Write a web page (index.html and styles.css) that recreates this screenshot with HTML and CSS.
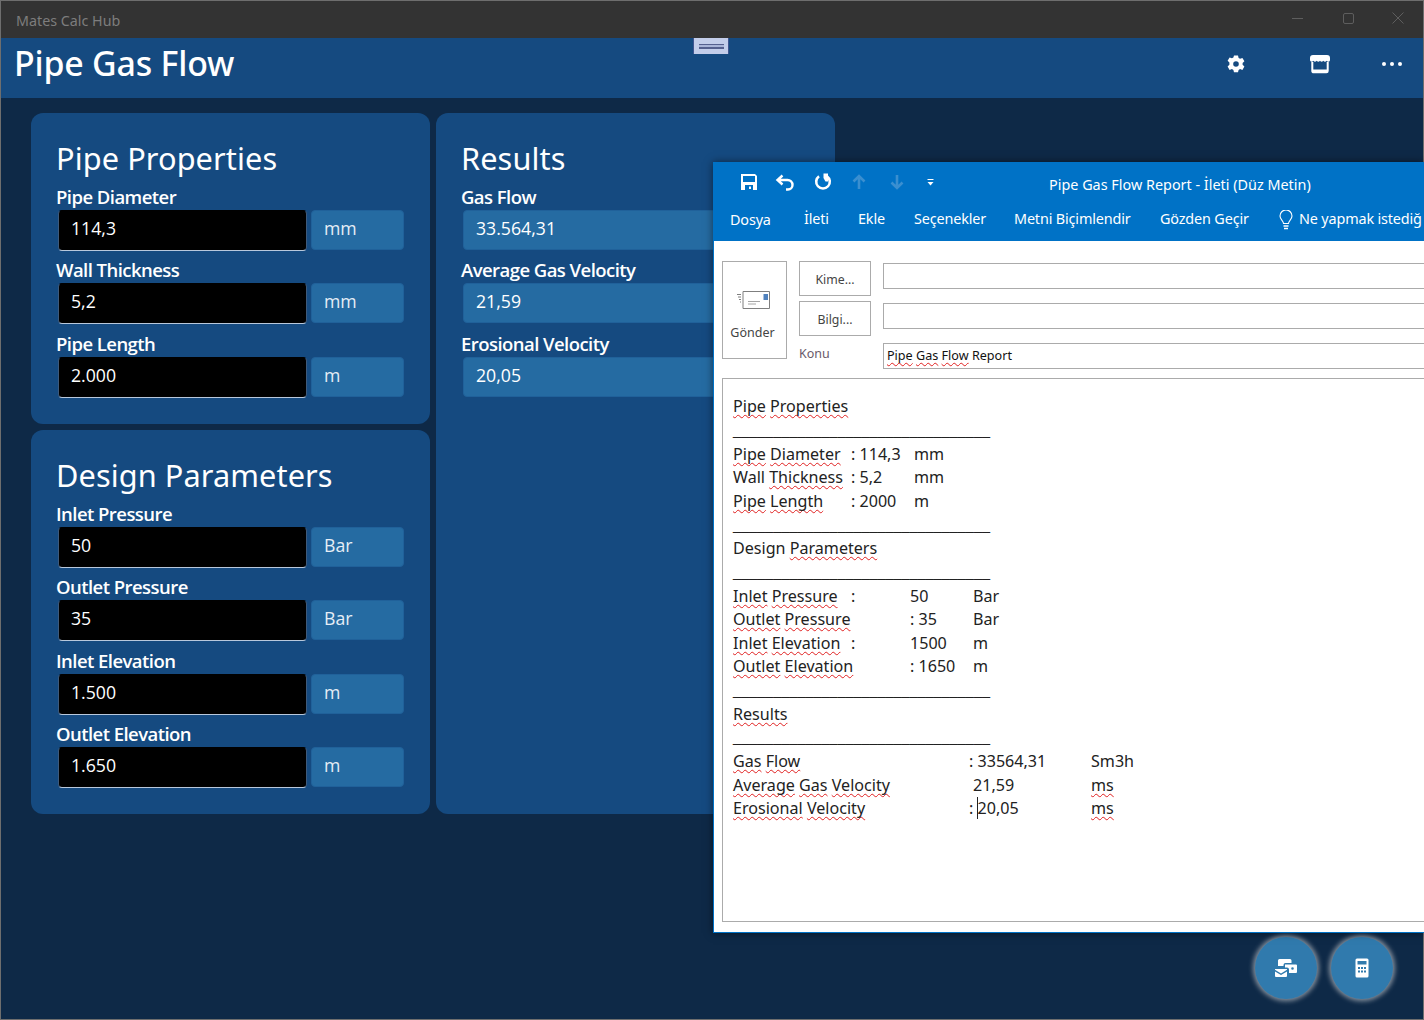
FILE: index.html
```html
<!DOCTYPE html>
<html lang="en">
<head>
<meta charset="utf-8">
<title>Mates Calc Hub</title>
<link rel="stylesheet" href="styles.css">
</head>
<body>
<div class="app">
  <div class="titlebar">
    <span class="app-name">Mates Calc Hub</span>
    <div class="win-controls">
      <svg width="14" height="14" viewBox="0 0 14 14"><path d="M1 7.5h11" stroke="#5e5e5e" fill="none"/></svg>
      <svg width="14" height="14" viewBox="0 0 14 14"><rect x="2.5" y="2.5" width="10" height="10" rx="1.5" stroke="#5e5e5e" fill="none"/></svg>
      <svg width="14" height="14" viewBox="0 0 14 14"><path d="M1.5 1.5l11 11M12.5 1.5l-11 11" stroke="#5e5e5e" fill="none"/></svg>
    </div>
  </div>
  <header class="appbar">
    <h1 class="page-title">Pipe Gas Flow</h1>
    <div class="handle"><span class="handle-line"></span></div>
    <div class="app-actions">
      <svg class="act-gear" width="20" height="20" viewBox="0 0 20 20"><path fill="#fff" fill-rule="evenodd" d="M8 1.5h4l.6 2.4 1.5.8 2.3-.8 2 3.4-1.8 1.7v1.8l1.8 1.7-2 3.4-2.3-.8-1.500.8-.6 2.400H8l-.6-2.400-1.500-.8-2.300.8-2-3.400 1.800-1.700V8.500L1.600 6.800l2-3.400 2.300.8 1.500-.8zM10 7.200a2.800 2.800 0 1 0 0 5.600 2.800 2.800 0 0 0 0-5.600z"/></svg>
      <svg class="act-store" width="22" height="20" viewBox="0 0 22 20"><path fill="#fff" d="M4 1h14a3 3 0 0 1 3 3v2.200a1.800 1.800 0 0 1-3.300.6 2.300 2.300 0 0 1-3.400 0 2.300 2.300 0 0 1-3.300 0 2.300 2.300 0 0 1-3.300 0 2.300 2.300 0 0 1-3.400 0A1.800 1.800 0 0 1 1 6.200V4a3 3 0 0 1 3-3z"/><path d="M3.300 8v9a1.300 1.300 0 0 0 1.300 1.300h12.800a1.300 1.300 0 0 0 1.300-1.300V8" fill="none" stroke="#fff" stroke-width="2"/><path fill="#fff" d="M4 15.500h14V18H4z"/></svg>
      <svg class="act-more" width="22" height="6" viewBox="0 0 22 6"><circle cx="3" cy="3" r="2" fill="#fff"/><circle cx="11" cy="3" r="2" fill="#fff"/><circle cx="19" cy="3" r="2" fill="#fff"/></svg>
    </div>
  </header>
  <main class="content">
    <div class="col">
      <section class="card card-pipe">
        <h2 class="card-title">Pipe Properties</h2>
        <div class="field"><label class="field-label">Pipe Diameter</label><div class="field-row"><div class="input">114,3</div><div class="unit">mm</div></div></div>
        <div class="field"><label class="field-label">Wall Thickness</label><div class="field-row"><div class="input">5,2</div><div class="unit">mm</div></div></div>
        <div class="field"><label class="field-label">Pipe Length</label><div class="field-row"><div class="input">2.000</div><div class="unit">m</div></div></div>
      </section>
      <section class="card card-design">
        <h2 class="card-title">Design Parameters</h2>
        <div class="field"><label class="field-label">Inlet Pressure</label><div class="field-row"><div class="input">50</div><div class="unit">Bar</div></div></div>
        <div class="field"><label class="field-label">Outlet Pressure</label><div class="field-row"><div class="input">35</div><div class="unit">Bar</div></div></div>
        <div class="field"><label class="field-label">Inlet Elevation</label><div class="field-row"><div class="input">1.500</div><div class="unit">m</div></div></div>
        <div class="field"><label class="field-label">Outlet Elevation</label><div class="field-row"><div class="input">1.650</div><div class="unit">m</div></div></div>
      </section>
    </div>
    <div class="col">
      <section class="card card-results">
        <h2 class="card-title">Results</h2>
        <div class="field"><label class="field-label">Gas Flow</label><div class="field-row"><div class="output">33.564,31</div></div></div>
        <div class="field"><label class="field-label">Average Gas Velocity</label><div class="field-row"><div class="output">21,59</div></div></div>
        <div class="field"><label class="field-label">Erosional Velocity</label><div class="field-row"><div class="output">20,05</div></div></div>
      </section>
    </div>
  </main>
  <div class="fabs">
    <button class="fab">
      <svg width="24" height="20" viewBox="0 0 24 20"><path fill="#fff" d="M4 2.500A1.500 1.500 0 0 1 5.500 1H16a1.500 1.500 0 0 1 1.500 1.500V5h-6a2 2 0 0 0-2 2v1H4z"/><path fill="#fff" d="M11 6.500h11a1 1 0 0 1 1 1V14a1 1 0 0 1-1 1h-7v-3.500a2 2 0 0 0-2-2h-2zM18.500 9.200a1.300 1.300 0 1 0 0 2.600 1.300 1.300 0 0 0 0-2.600z" fill-rule="evenodd"/><path fill="#fff" d="M1 11h12v.8L7 15.400 1 11.800zM1 13.400l6 3.500 6-3.500V18a1 1 0 0 1-1 1H2a1 1 0 0 1-1-1z"/></svg>
    </button>
    <button class="fab">
      <svg width="14" height="20" viewBox="0 0 14 20"><path fill="#fff" fill-rule="evenodd" d="M2 .500h10A1.500 1.500 0 0 1 13.500 2v16a1.500 1.500 0 0 1-1.500 1.500H2A1.500 1.500 0 0 1 .5 18V2A1.500 1.500 0 0 1 2 .500zM2.500 3v3.500h9V3zM3 9v2h2V9zm3 0v2h2V9zm3 0v2h2V9zM3 12.500v2h2v-2zm3 0v2h2v-2zm3 0v2h2v-2z"/></svg>
    </button>
  </div>
</div>

<div class="mail">
  <div class="mail-top">
    <div class="qat">
      <svg class="qat-save" width="16" height="16" viewBox="0 0 16 16"><path fill="#fff" fill-rule="evenodd" d="M0 0h14l2 2v14H0zM2 2v6h12V2zM4 11v5h8v-5zm4 1.500h2V15H8z"/></svg>
      <svg class="qat-undo" width="20" height="17" viewBox="0 0 20 17"><path d="M7.500 1.500L2.500 6l5 4.500M3 6h9.500a5 5 0 0 1 5 5 4.500 4.500 0 0 1-4.500 4.500h-2" fill="none" stroke="#fff" stroke-width="2.400"/></svg>
      <svg class="qat-redo" width="18" height="18" viewBox="0 0 18 18"><path d="M5 3.200A6.800 6.800 0 1 0 13 3.200" fill="none" stroke="#fff" stroke-width="2.600"/><path d="M9.500.5h4.500v8h-2.500l-2-3.500z" fill="#fff"/></svg>
      <svg class="qat-arrow" width="14" height="16" viewBox="0 0 14 16"><path d="M7 15V2.500M1.500 7.500L7 2l5.500 5.500" fill="none" stroke="#3a8fd0" stroke-width="2.600"/></svg>
      <svg class="qat-arrow" width="14" height="16" viewBox="0 0 14 16"><path d="M7 1v12.500M1.500 8.500L7 14l5.500-5.500" fill="none" stroke="#3a8fd0" stroke-width="2.600"/></svg>
      <svg class="qat-more" width="7" height="8" viewBox="0 0 7 8"><path d="M.5 1.500h6" stroke="#fff"/><path d="M.5 4h6L3.500 7.500z" fill="#fff"/></svg>
    </div>
    <div class="mail-title">Pipe Gas Flow Report - İleti (Düz Metin)</div>
  </div>
  <nav class="ribbon">
    <span class="tab tab-file">Dosya</span>
    <span class="tab tab-ileti">İleti</span>
    <span class="tab tab-ekle">Ekle</span>
    <span class="tab tab-sec">Seçenekler</span>
    <span class="tab tab-metni">Metni Biçimlendir</span>
    <span class="tab tab-gozden">Gözden Geçir</span>
    <svg class="bulb" width="14" height="20" viewBox="0 0 14 20"><path d="M4.500 13.500C4.500 11 1 9.500 1 6a6 6 0 0 1 12 0c0 3.500-3.500 5-3.500 7.500z" fill="none" stroke="#fff" stroke-width="1.100"/><path d="M4.500 16h5M5 18.500h4" stroke="#fff" stroke-width="1.300"/></svg>
    <span class="tab tab-tell">Ne yapmak istediğ</span>
  </nav>
  <div class="compose">
    <div class="send">
      <svg width="34" height="20" viewBox="0 0 34 20"><path d="M7 .500h26.500V17.500H7z" fill="#fff" stroke="#7f7f7f"/><path d="M27.500 3h4.500v6h-4.500z" fill="#4f81bd"/><path d="M12 10.500h12M12 13h8" stroke="#a6a6a6"/><path d="M1 3.500h4M2 6h3M3 8.500h2M4 11h1" stroke="#7f7f7f"/></svg>
      <span class="send-text">Gönder</span>
    </div>
    <div class="addr">
      <div class="addr-row"><div class="addr-btn">Kime...</div><div class="addr-input"></div></div>
      <div class="addr-row"><div class="addr-btn">Bilgi...</div><div class="addr-input"></div></div>
      <div class="addr-row addr-subject"><div class="addr-label">Konu</div><div class="addr-input subject-input"><span class="sp">Pipe</span> <span class="sp">Gas</span> <span class="sp">Flow</span> Report</div></div>
    </div>
  </div>
  <div class="body-box">
    <div class="ln"><span><span class="sp">Pipe</span> <span class="sp">Properties</span></span></div>
    <div class="ln rule">________________________________</div>
    <div class="ln"><span class="c1"><span class="sp">Pipe</span> <span class="sp">Diameter</span></span><span class="c2">: 114,3</span><span>mm</span></div>
    <div class="ln"><span class="c1">Wall <span class="sp">Thickness</span></span><span class="c2">: 5,2</span><span>mm</span></div>
    <div class="ln"><span class="c1"><span class="sp">Pipe</span> <span class="sp">Length</span></span><span class="c2">: 2000</span><span>m</span></div>
    <div class="ln rule">________________________________</div>
    <div class="ln"><span>Design <span class="sp">Parameters</span></span></div>
    <div class="ln rule">________________________________</div>
    <div class="ln"><span class="c3"><span class="sp">Inlet</span> <span class="sp">Pressure</span></span><span class="c3b">:</span><span class="c4">50</span><span>Bar</span></div>
    <div class="ln"><span class="c3w"><span class="sp">Outlet</span> <span class="sp">Pressure</span></span><span class="c4">: 35</span><span>Bar</span></div>
    <div class="ln"><span class="c3"><span class="sp">Inlet</span> <span class="sp">Elevation</span></span><span class="c3b">:</span><span class="c4">1500</span><span>m</span></div>
    <div class="ln"><span class="c3w"><span class="sp">Outlet</span> <span class="sp">Elevation</span></span><span class="c4">: 1650</span><span>m</span></div>
    <div class="ln rule">________________________________</div>
    <div class="ln"><span class="sp">Results</span></div>
    <div class="ln rule">________________________________</div>
    <div class="ln"><span class="c5"><span class="sp">Gas</span> <span class="sp">Flow</span></span><span class="c6">: 33564,31</span><span>Sm3h</span></div>
    <div class="ln"><span class="c5"><span class="sp">Average</span> <span class="sp">Gas</span> <span class="sp">Velocity</span></span><span class="c6 c6-in">21,59</span><span class="sp">ms</span></div>
    <div class="ln"><span class="c5"><span class="sp">Erosional</span> <span class="sp">Velocity</span></span><span class="c6">: <span class="caret">20,05</span></span><span class="sp">ms</span></div>
  </div>
</div>
</body>
</html>
```
FILE: styles.css
```css
* { box-sizing: border-box; }
html, body { margin: 0; height: 100%; }
body { width: 1424px; height: 1020px; overflow: hidden; font-family: "Open Sans", "Noto Sans", sans-serif; position: relative; }
.app { width: 1424px; height: 1020px; background: #0e2947; border: 1px solid #6e6e6e; display: flex; flex-direction: column; position: relative; }
.titlebar { height: 37px; flex: none; background: #333; display: flex; align-items: center; justify-content: space-between; }
.app-name { margin-left: 15px; margin-top: 1px; font-size: 14.300px; color: #7d7d7d; font-family: "Noto Sans", sans-serif; }
.win-controls { display: flex; gap: 36px; margin-right: 18px; margin-top: -4px; }
.appbar { height: 60px; flex: none; background: #154a80; display: flex; align-items: center; position: relative; }
.page-title { margin: 0 0 10px 13px; font-size: 33.900px; font-weight: 500; color: #fff; line-height: 50px; font-family: "Noto Sans", sans-serif; letter-spacing: -.2px; }
.handle { position: absolute; left: 692px; top: 0; width: 36px; height: 16px; background: #c3cdea; border-left: 1px solid #3f5590; border-right: 1px solid #3f5590; display: flex; align-items: center; justify-content: center; }
.handle-line { width: 25px; height: 5px; background: #a9b4d8; border-top: 1px solid #55608f; border-bottom: 2px solid #55608f; }
.app-actions { margin-left: auto; display: flex; align-items: center; margin-right: 20px; margin-bottom: 8px; }
.act-gear { margin-right: 63px; }
.act-store { margin-right: 50px; }
.content { display: flex; gap: 6px; padding: 15px 0 0 30px; align-items: flex-start; }
.col { display: flex; flex-direction: column; gap: 6px; width: 399px; }
.card { background: #154a80; border-radius: 12px; padding: 22px 26px 0 27px; }
.card-pipe { height: 311px; }
.card-design { height: 384px; }
.card-results { height: 701px; }
.card-title { margin: 0 0 2.700px -2px; font-size: 30.700px; line-height: 46px; font-weight: 400; color: #fff; font-family: "Noto Sans", sans-serif; letter-spacing: .1px; }
.field { height: 73.500px; }
.field-label { display: block; height: 26px; margin-left: -2px; font-size: 18.500px; line-height: 25px; font-weight: 600; color: #fff; letter-spacing: -.55px; }
.field-row { display: flex; gap: 4px; }
.input { width: 249px; height: 41px; background: #000; border-radius: 4px; border: 1px solid #3d5a7c; border-top-color: #000; border-bottom-color: #b8c8dc; color: #fff; font-size: 17.700px; line-height: 34px; padding-left: 12px; }
.unit { width: 93px; height: 40px; background: #256ba2; border-radius: 4px; border: 1px solid #20619a; color: #e6eef6; font-size: 17.700px; line-height: 34px; padding-left: 12px; }
.output { width: 347px; height: 40px; background: #256ba2; border-radius: 4px; border: 1px solid #20619a; color: #fff; font-size: 17.700px; line-height: 34px; padding-left: 12px; }
.fabs { position: absolute; right: 30px; bottom: 20px; display: flex; gap: 14px; }
.fab { width: 62px; height: 62px; padding: 0; border-radius: 50%; border: 0; background: #307aad; box-shadow: 0 0 5px 2px rgba(220,220,220,.6); display: flex; align-items: center; justify-content: center; }
.mail { position: absolute; left: 713px; top: 162px; width: 711px; height: 771px; background: #fff; overflow: hidden; border-left: 1px solid #0072c6; border-bottom: 1px solid #0072c6; box-shadow: 0 0 8px rgba(0,0,0,.5); font-family: "Noto Sans", sans-serif; }
.mail-top { height: 44px; background: #0072c6; display: flex; align-items: center; position: relative; }
.qat { display: flex; align-items: center; padding-left: 27px; margin-top: -4px; }
.qat-save { margin-right: 18px; }
.qat-undo { margin-right: 19px; }
.qat-redo { margin-right: 20px; }
.qat-arrow { margin-right: 24px; }
.qat-more { margin-left: -1px; }
.mail-title { position: absolute; left: 335px; top: 13px; font-size: 14.400px; line-height: 20px; color: #fff; white-space: nowrap; }
.ribbon { height: 35px; background: #0072c6; display: flex; align-items: flex-start; white-space: nowrap; color: #fff; font-size: 14.400px; line-height: 20px; letter-spacing: -.15px; }
.tab { display: block; flex: none; margin-top: 3px; }
.tab-file { margin-left: 16px; width: 74px; margin-top: 4px; }
.tab-ileti { width: 54px; }
.tab-ekle { width: 56px; }
.tab-sec { width: 100px; }
.tab-metni { width: 146px; }
.tab-gozden { width: 119px; }
.bulb { flex: none; margin-top: 4px; margin-right: 6px; }
.compose { display: flex; height: 137px; padding: 20px 0 0 8px; }
.send { width: 65px; height: 98px; border: 1px solid #ababab; display: flex; flex-direction: column; align-items: center; flex: none; padding: 29px 4px 0 0; color: #444; font-size: 12.500px; }
.send-text { margin-top: 14px; line-height: 16px; }
.addr { flex: 1; margin-left: 12px; display: flex; flex-direction: column; gap: 5px; }
.addr-row { display: flex; height: 35px; }
.addr-btn { width: 72px; height: 35px; border: 1px solid #ababab; color: #444; font-size: 12.300px; line-height: 35px; text-align: center; flex: none; }
.addr-input { flex: 1; height: 26px; margin: 2px 0 0 12px; border: 1px solid #ababab; border-right: 0; }
.addr-subject { height: 26px; }
.addr-label { width: 72px; color: #6a5a6a; font-size: 12.500px; line-height: 26px; flex: none; }
.subject-input { font-size: 12.600px; line-height: 23px; padding-left: 3px; color: #111; }
.sp { text-decoration: underline wavy #e02020 1px; text-underline-offset: 2px; text-decoration-skip-ink: none; }
.body-box { position: absolute; left: 8px; top: 216px; width: 720px; height: 544px; border: 1px solid #ababab; padding: 15.400px 0 0 10px; font-size: 16.100px; color: #222; }
.ln { height: 23.650px; line-height: 24px; white-space: nowrap; display: flex; }
.ln > span { flex: none; white-space: pre; }
.rule { font-family: "Liberation Sans", sans-serif; font-size: 14.450px; line-height: 24px; color: #222; }
.c1 { width: 118px; }
.c2 { width: 63px; }
.c3 { width: 118px; }
.c3w { width: 177px; }
.c3b { width: 59px; }
.c4 { width: 63px; }
.c5 { width: 236px; }
.c6 { width: 122px; }
.c6-in { padding-left: 4px; }
.caret { border-left: 1px solid #222; margin-left: -1px; }
```
